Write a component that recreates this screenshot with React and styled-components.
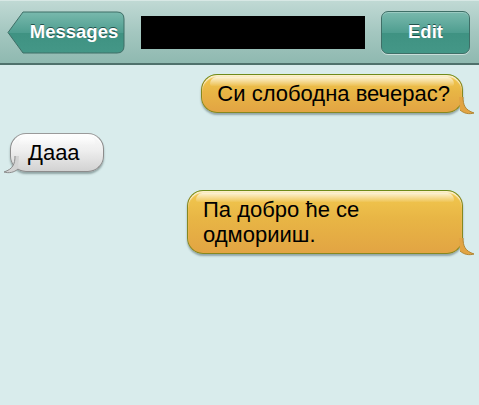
import styled, { createGlobalStyle } from "styled-components";

const GlobalStyle = createGlobalStyle`
  html, body {
    margin: 0;
    padding: 0;
    background: #d9ecec;
  }
  body {
    font-family: "Liberation Sans", Arial, sans-serif;
  }
`;

const Screen = styled.div`
  width: 479px;
  height: 405px;
  overflow: hidden;
  background: #d9ecec;
`;

// header

const NavBar = styled.div`
  height: 65px;
  display: flex;
  align-items: center;
  padding: 0 9px 0 7px;
  background: linear-gradient(#c0d9d4 0%, #a4c7c0 50%, #8fb9b0 100%);
  border-top: 1px solid #d8e8e5;
  border-bottom: 2px solid #4f716c;
  box-sizing: border-box;
`;

const BackButton = styled.div`
  position: relative;
  width: 118px;
  height: 43px;
  display: flex;
  align-items: center;
  justify-content: center;
  padding-left: 16px;
  box-sizing: border-box;
  color: #fff;
  font-size: 18.5px;
  font-weight: 700;
  text-shadow: 0 -1px 0 rgba(20, 60, 55, 0.8);
`;

const ButtonShape = styled.svg`
  position: absolute;
  left: 0;
  top: 0;
`;

const Label = styled.span`
  position: relative;
`;

const Title = styled.div`
  width: 224px;
  height: 33px;
  margin-left: 16px;
  background: #000;
`;

const EditButton = styled.div`
  width: 89px;
  height: 43px;
  margin-left: auto;
  display: flex;
  align-items: center;
  justify-content: center;
  box-sizing: border-box;
  border: 1px solid #3f6f67;
  border-radius: 7px;
  background: linear-gradient(#79b9ad 0%, #4f9e90 50%, #3f9282 51%, #449787 100%);
  box-shadow: 0 1px 0 rgba(255, 255, 255, 0.5), inset 0 1px 0 rgba(255, 255, 255, 0.25);
  color: #fff;
  font-size: 18.5px;
  font-weight: 700;
  text-shadow: 0 -1px 0 rgba(20, 60, 55, 0.8);
`;

// messages

const Thread = styled.div`
  display: flex;
  flex-direction: column;
  padding: 9px 16px 0 10px;
`;

const Row = styled.div`
  display: flex;
  justify-content: ${(p) => (p.$mine ? "flex-end" : "flex-start")};
  margin-top: ${(p) => p.$gap}px;
`;

const Bubble = styled.div`
  position: relative;
  box-sizing: border-box;
  width: ${(p) => (p.$width ? p.$width + "px" : "auto")};
  padding: ${(p) => (p.$mine ? "6px 12px 6px 15px" : "6px 23px 6px 17px")};
  font-size: 22px;
  line-height: 25px;
  color: #000;
  border-radius: 16px;
  border: 1px solid ${(p) => (p.$mine ? "#86881f" : "#8c8c8c")};
  border-top-color: ${(p) => (p.$mine ? "#6f8a1a" : "#9a9a9a")};
  background: ${(p) =>
    p.$mine
      ? "linear-gradient(#f2c94f 0%, #e8b545 45%, #e2a443 100%)"
      : "linear-gradient(#fbfbfb 0%, #eeeeee 45%, #d2d2d2 100%)"};
  box-shadow: 0 2px 2px rgba(60, 80, 80, 0.45),
    inset 0 2px 1px rgba(255, 255, 255, 0.7);

  &::before {
    content: "";
    position: absolute;
    left: 8px;
    right: 8px;
    top: 2px;
    height: 9px;
    border-radius: 10px 10px 4px 4px;
    background: linear-gradient(rgba(255, 255, 255, 0.75), rgba(255, 255, 255, 0.05));
  }
`;

const Text = styled.span`
  position: relative;
`;

const Tail = styled.svg`
  position: absolute;
  bottom: -3px;
  ${(p) => (p.$mine ? "right: -13px;" : "left: -8px; transform: scaleX(-1);")}
`;

function BubbleTail({ mine }) {
  const fill = mine ? "#e2a443" : "#d3d3d3";
  const stroke = mine ? "#b28732" : "#8c8c8c";
  return (
    <Tail $mine={mine} width="16" height="18" viewBox="0 0 16 18">
      <path
        d="M0 0 L4 0 C4 8 6 13 15 16 C10 17.5 5 16.5 1 13 Z"
        fill={fill}
      />
      <path
        d="M4 0 C4 8 6 13 15 16 C10 17.5 5 16.5 1 13"
        fill="none"
        stroke={stroke}
        strokeWidth="1"
      />
    </Tail>
  );
}

function App() {
  return (
    <Screen>
      <GlobalStyle />
      <NavBar>
        <BackButton>
          <ButtonShape width="118" height="43" viewBox="0 0 118 43">
            <defs>
              <linearGradient id="backGrad" x1="0" y1="0" x2="0" y2="1">
                <stop offset="0" stopColor="#79b9ad" />
                <stop offset="0.5" stopColor="#4f9e90" />
                <stop offset="0.51" stopColor="#3f9282" />
                <stop offset="1" stopColor="#449787" />
              </linearGradient>
            </defs>
            <path
              d="M16 1 L110 1 Q117 1 117 8 L117 35 Q117 42 110 42 L16 42 L1 21.5 Z"
              fill="url(#backGrad)"
              stroke="#3f6f67"
              strokeWidth="1"
            />
          </ButtonShape>
          <Label>Messages</Label>
        </BackButton>
        <Title />
        <EditButton>Edit</EditButton>
      </NavBar>
      <Thread>
        <Row $mine $gap={0}>
          <Bubble $mine>
            <Text>Си слободна вечерас?</Text>
            <BubbleTail mine />
          </Bubble>
        </Row>
        <Row $gap={20}>
          <Bubble>
            <Text>Дааа</Text>
            <BubbleTail />
          </Bubble>
        </Row>
        <Row $mine $gap={18}>
          <Bubble $mine $width={276}>
            <Text>Па добро ће се одморииш.</Text>
            <BubbleTail mine />
          </Bubble>
        </Row>
      </Thread>
    </Screen>
  );
}

export default App;
